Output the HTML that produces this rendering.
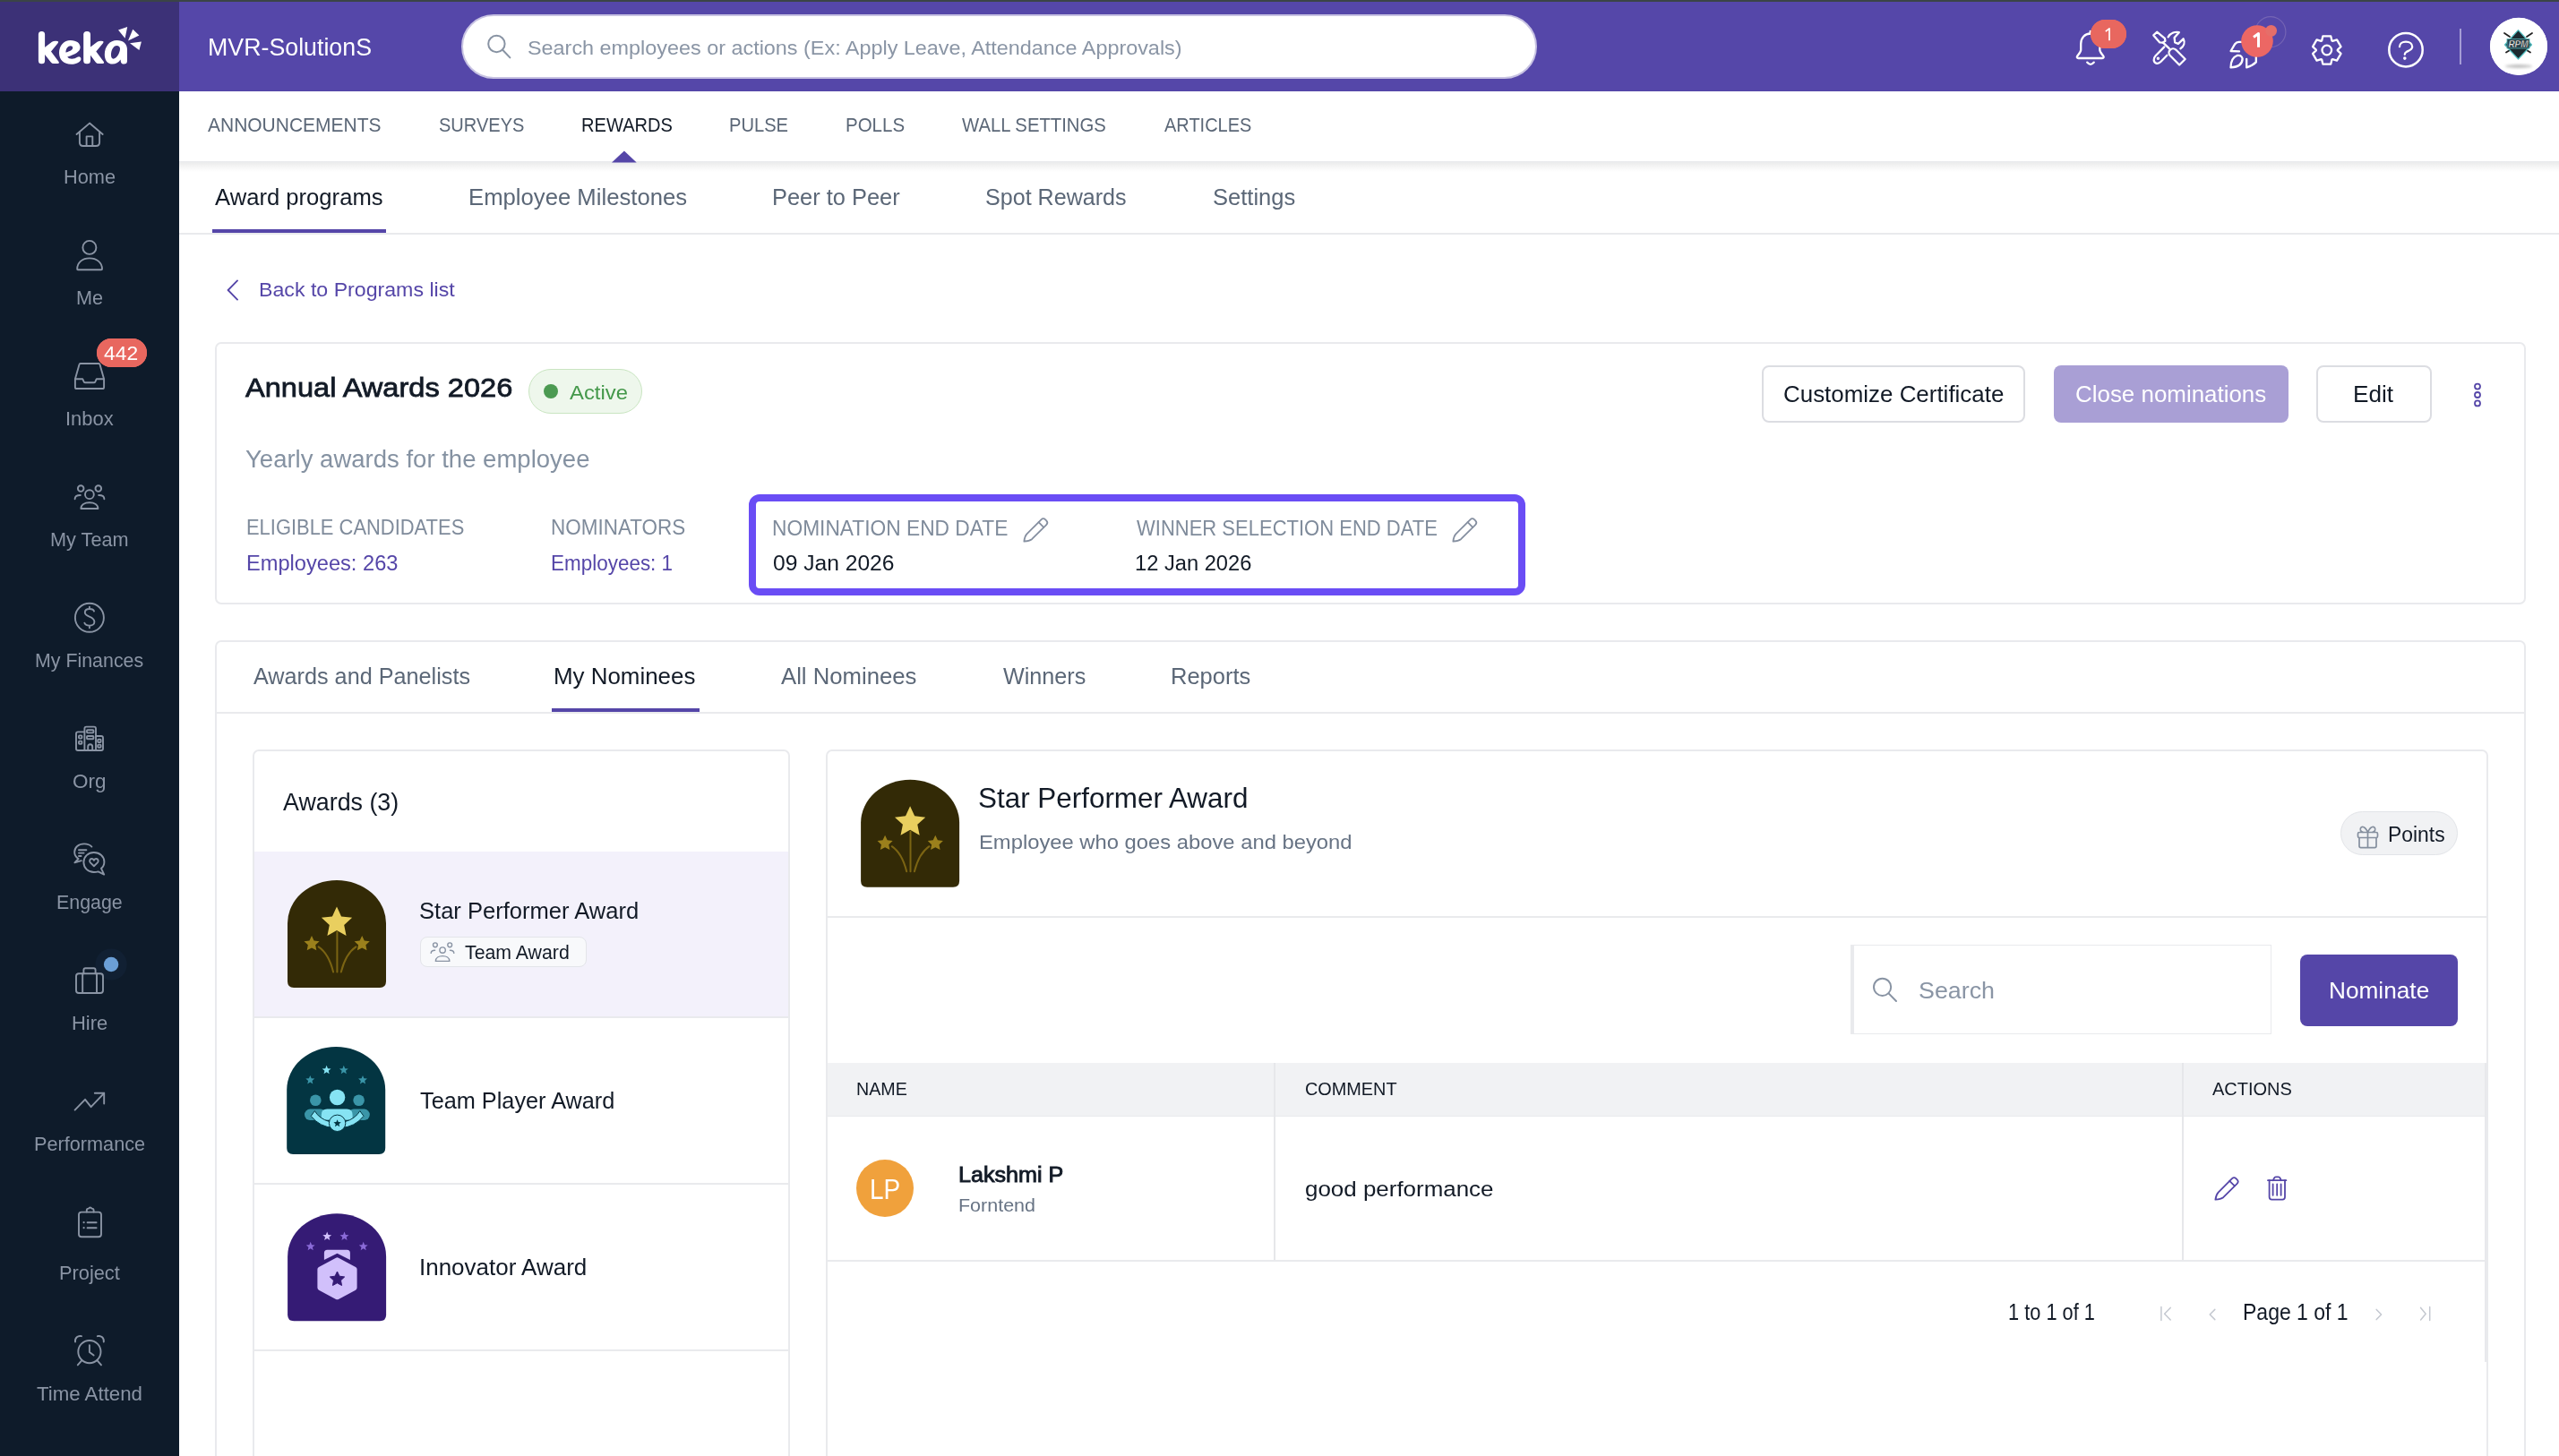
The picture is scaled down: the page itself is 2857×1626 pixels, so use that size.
<!DOCTYPE html><html><head><meta charset="utf-8"><style>
html,body{margin:0;padding:0}body{width:2857px;height:1626px;overflow:hidden;position:relative;background:#fff;font-family:"Liberation Sans",sans-serif}
.t{position:absolute;white-space:nowrap;line-height:1;transform-origin:0 0}
</style></head><body>
<div style="position:absolute;left:0px;top:0px;width:2857px;height:2px;background:#3b4446"></div>
<div style="position:absolute;left:0px;top:2px;width:200px;height:100px;background:#3c3177"></div>
<div style="position:absolute;left:200px;top:2px;width:2657px;height:100px;background:#5547a9"></div>
<div style="position:absolute;left:0px;top:102px;width:200px;height:1524px;background:#0e1b2a"></div>
<div style="position:absolute;left:200px;top:180px;width:2657px;height:12px;background:linear-gradient(#e8e9ec,#efefef 25%,#f6f6f6 55%,rgba(255,255,255,0))"></div>
<div style="position:absolute;left:200px;top:260px;width:2657px;height:2px;background:#e9eaed"></div>
<div style="position:absolute;left:237px;top:256px;width:194px;height:4px;background:#5546a8"></div>
<div style="position:absolute;left:515px;top:15.8px;width:1200.5px;height:71.8px;box-sizing:border-box;background:#fff;border:2px solid #c7c2e2;border-radius:36px"></div>
<div style="position:absolute;left:240px;top:382px;width:2580px;height:293px;box-sizing:border-box;border:2px solid #e9eaed;border-radius:7px;background:#fff"></div>
<div style="position:absolute;left:590px;top:412px;width:127px;height:50px;box-sizing:border-box;background:#eef7ec;border:1.5px solid #c9e5c1;border-radius:25px"></div>
<div style="position:absolute;left:607px;top:429px;width:16px;height:16px;background:#4c9a52;border-radius:50%"></div>
<div style="position:absolute;left:835.8px;top:551.6px;width:867.2px;height:113.4px;box-sizing:border-box;border:8px solid #6a4df5;border-radius:12px"></div>
<div style="position:absolute;left:1967px;top:408px;width:294px;height:64px;box-sizing:border-box;border:2px solid #dcdde2;border-radius:8px;background:#fff"></div>
<div style="position:absolute;left:2292.5px;top:408px;width:262px;height:64px;background:#a99fd5;border-radius:8px"></div>
<div style="position:absolute;left:2586.2px;top:408px;width:128.4px;height:64px;box-sizing:border-box;border:2px solid #dcdde2;border-radius:8px;background:#fff"></div>
<div style="position:absolute;left:240px;top:714.8px;width:2580px;height:1000px;box-sizing:border-box;border:2px solid #e9eaed;border-radius:7px;background:#fff"></div>
<div style="position:absolute;left:242px;top:795px;width:2576px;height:2px;background:#e9eaed"></div>
<div style="position:absolute;left:615.6px;top:791px;width:165.4px;height:4px;background:#5546a8"></div>
<div style="position:absolute;left:282px;top:837px;width:600px;height:900px;box-sizing:border-box;border:2px solid #e9eaed;border-radius:7px;background:#fff"></div>
<div style="position:absolute;left:284px;top:951px;width:596px;height:184px;background:#f3f1fb"></div>
<div style="position:absolute;left:284px;top:1135px;width:596px;height:2px;background:#e9eaed"></div>
<div style="position:absolute;left:284px;top:1321px;width:596px;height:2px;background:#e9eaed"></div>
<div style="position:absolute;left:284px;top:1506.5px;width:596px;height:2px;background:#e9eaed"></div>
<div style="position:absolute;left:468.5px;top:1045.6px;width:186px;height:34.7px;box-sizing:border-box;background:#f8f9fb;border:1.5px solid #e3e5e9;border-radius:8px"></div>
<div style="position:absolute;left:922px;top:837px;width:1856px;height:900px;box-sizing:border-box;border:2px solid #e9eaed;border-radius:7px;background:#fff"></div>
<div style="position:absolute;left:924px;top:1022.6px;width:1852px;height:2px;background:#e9eaed"></div>
<div style="position:absolute;left:2613.2px;top:906.2px;width:131.3px;height:49.2px;box-sizing:border-box;background:#f1f2f4;border:1.5px solid #e2e4e8;border-radius:25px"></div>
<div style="position:absolute;left:2066px;top:1055px;width:470px;height:100px;box-sizing:border-box;border:1.8px solid #e9eaed;border-left:4px solid #e9eaed;background:#fff"></div>
<div style="position:absolute;left:2568.4px;top:1066px;width:175.6px;height:79.6px;background:#5546a8;border-radius:8px"></div>
<div style="position:absolute;left:924px;top:1187px;width:1850px;height:58.5px;background:#f1f2f4"></div>
<div style="position:absolute;left:924px;top:1245.5px;width:1850px;height:1.6px;background:#e9eaed"></div>
<div style="position:absolute;left:924px;top:1406.5px;width:1850px;height:2px;background:#e9eaed"></div>
<div style="position:absolute;left:1421.7px;top:1187px;width:2px;height:220px;background:#e6e7ea"></div>
<div style="position:absolute;left:2436px;top:1187px;width:2px;height:220px;background:#e6e7ea"></div>
<div style="position:absolute;left:2774px;top:1187px;width:2px;height:334px;background:#e8e9ec"></div>
<div style="position:absolute;left:956px;top:1294.8px;width:64px;height:64px;background:#f0a13c;border-radius:50%"></div>
<div style="position:absolute;left:2334px;top:22px;width:40px;height:32px;background:#e8675f;border-radius:16px"></div>
<div style="position:absolute;left:108px;top:378px;width:56px;height:32px;background:#e8675f;border-radius:16px"></div>
<div style="position:absolute;left:2780px;top:19.8px;width:64px;height:64px;background:#fff;border-radius:50%"></div>
<div style="position:absolute;left:2746px;top:32px;width:2px;height:40px;background:#a59dd6"></div>
<svg style="position:absolute;left:0;top:0" width="2857" height="1626"><g fill="#fff">
<rect x="42.9" y="35" width="7.2" height="36.3" rx="3.5"/>
<path d="M48.5,54 L58,46.8 Q60,45.6 62.5,45.8 L64.3,46 Q66,46.6 64.6,48.3 L57,57.6 L65.8,69.3 Q66.6,71 64.5,71 L60,71 Q58,71 56.8,69.5 L48.5,59 Z"/>
<rect x="93.2" y="35" width="7.8" height="36.3" rx="3.6"/>
<path d="M99,54 L108.6,46.8 Q110.6,45.6 113,45.8 L114.8,46 Q116.4,46.6 115,48.3 L107.3,57.6 L116,69.3 Q116.8,71 114.7,71 L110,71 Q108,71 106.8,69.5 L99,59 Z"/>
<path fill-rule="evenodd" d="M78.6,44.9 C86,44.9 89.6,48.6 89.6,52.8 C89.6,57.8 84,60.6 75.2,63.6 C76.4,65.2 78,65.8 80.2,65.8 C82.6,65.8 84.6,64.9 86.4,63.8 C88.2,62.6 90.4,63.4 90.4,65.8 C90.4,67.4 89.4,68.6 88,69.5 C85.6,71 82.6,71.8 79.4,71.8 C71.2,71.8 66,66.6 66,59 C66,50.8 71.6,44.9 78.6,44.9 Z M73.4,58.6 C78,57.2 81.2,55.6 81.2,53.4 C81.2,52 80.2,51.2 78.8,51.2 C75.8,51.2 73.6,54 73.4,58.6 Z"/>
<path fill-rule="evenodd" d="M130.5,44.9 C137.5,44.9 142,48.8 142,55 L142,68 Q142,71.5 138.4,71.5 Q135,71.5 134.8,68.4 L134.6,66.6 C132.4,69.8 129.2,71.6 125.6,71.6 C120.2,71.6 116.8,67.4 116.8,61 C116.8,51.6 122.6,44.9 130.5,44.9 Z M124,61.6 C124,64.2 125,65.7 126.5,65.7 C130.2,65.7 134,59 134,54.6 C134,52.2 132.6,51 130.4,51 C126.6,51 124,56 124,61.6 Z"/>
<path d="M132,33.4 L142.2,30.1 L139.6,42.8 Z"/>
<path d="M148.3,32.7 L155.4,39.5 L143,45.4 Z"/>
<path d="M145,48.2 L157.9,46.4 L155.4,56 Z"/>
</g>
<g fill="none" stroke="#ffffff" stroke-width="2.3" stroke-linecap="round" stroke-linejoin="round">
<path d="M2333.75,34.8 V37.5"/>
<path d="M2333.75,37.5 C2327.6,37.5 2323.2,42.6 2323.2,49 V55.8 C2323.2,58.2 2320.6,60.6 2319.2,62.6 C2318.4,63.9 2318.9,65 2320.4,65 H2347.1 C2348.6,65 2349.1,63.9 2348.3,62.6 C2346.9,60.6 2344.3,58.2 2344.3,55.8 V49 C2344.3,42.6 2339.9,37.5 2333.75,37.5 Z"/>
<path d="M2330.2,69.6 Q2334,74.2 2337.8,69.6"/>
<path d="M2404.3,39.4 L2408.1,35.7 L2416.9,42.8 L2417.4,45.8 L2414.6,47.6 L2411.3,47.4 Z"/>
<path d="M2415,47.6 L2421.8,54.2"/>
<path d="M2422.75,62.05 L2433.15,72.45 L2439.65,65.95 L2429.25,55.55 A4.6,4.6 0 0 0 2422.75,62.05 Z"/>
<path d="M2420.6,41.3 C2423.5,36.8 2428.6,35.2 2432.8,36.2 L2427.6,42.1 L2428.2,47.4 L2431.9,48.8 L2437.6,43.3 C2439.8,47.6 2438.2,51.8 2434.4,54.2"/>
<path d="M2416.3,52.4 L2406.6,62.2 C2403.6,65.4 2404.2,69.6 2407.2,70.6 C2409.4,71.4 2411.2,70.2 2412.6,68.8 L2419.4,61.8"/>
<circle cx="2409.4" cy="65.2" r="0.6" fill="#fff"/>
<path d="M2490.6,57 L2495.2,49.2 Q2496.8,47 2499.6,46.9 L2506,46.9 M2490.6,57 L2500,57.4"/>
<path d="M2490.5,75.4 Q2490.6,64.6 2497.6,62 Q2502.6,61 2503.6,65.6 Q2503.4,74.6 2490.5,75.4 Z"/>
<path d="M2508.2,75.4 L2508.2,66 M2508.2,75.4 Q2515,73.2 2518.8,69.4 L2518.8,62"/>
<path d="M2592.17,45.40 L2593.33,40.43 L2602.27,40.43 L2603.43,45.40 L2604.16,45.82 L2609.05,44.35 L2613.52,52.08 L2609.79,55.58 L2609.79,56.42 L2613.52,59.92 L2609.05,67.65 L2604.16,66.18 L2603.43,66.60 L2602.27,71.57 L2593.33,71.57 L2592.17,66.60 L2591.44,66.18 L2586.55,67.65 L2582.08,59.92 L2585.81,56.42 L2585.81,55.58 L2582.08,52.08 L2586.55,44.35 L2591.44,45.82 Z"/>
<circle cx="2597.8" cy="56" r="5.3"/>
<circle cx="2686" cy="55.7" r="18.7" stroke-width="2.5"/>
<path d="M2679,52.2 C2679,48.6 2682,46.6 2686,46.6 C2690.2,46.6 2693.2,48.8 2693.2,52.2 C2693.2,55.4 2689.6,56.4 2686.6,58 C2685.2,58.8 2684.8,59.4 2684.8,60.8"/>
</g>
<circle cx="2684.8" cy="65.1" r="1.8" fill="#fff"/>
<circle cx="2535" cy="35.6" r="16.9" fill="none" stroke="#7464b4" stroke-width="1.2"/>
<rect x="2334" y="22" width="40" height="32" rx="16" fill="#e8675f"/>
<circle cx="2520" cy="46" r="17.8" fill="#ec6764"/>
<circle cx="2535.6" cy="34.4" r="6.4" fill="#e66e69"/>
<rect x="108" y="378" width="56" height="32" rx="16" fill="#e8675f"/>
<path d="M2355,45.3 V31.8 L2350.8,35.2" fill="none" stroke="#fff" stroke-width="1.7" stroke-linejoin="round"/>
<path d="M2521.5,52.8 V37.6 L2516,41.4" fill="none" stroke="#fff" stroke-width="3" stroke-linejoin="round"/>
<defs><filter id="blr" x="-50%" y="-50%" width="200%" height="200%"><feGaussianBlur stdDeviation="1.6"/></filter></defs>
<circle cx="2812" cy="51.8" r="32" fill="#fff"/>
<ellipse cx="2812" cy="74" rx="15" ry="1.9" fill="#c2c2c2" filter="url(#blr)"/>
<path d="M2796,37 L2802,41 M2827,37 L2821,41 M2798,58.5 L2803,55.5 M2825,58.5 L2820,55.5" stroke="#222" stroke-width="1.8" stroke-linecap="round"/>
<path d="M2811.5,33.6 L2826.5,50 L2811.5,66 L2796.5,50 Z" fill="#1b2a30" stroke="#55c3c6" stroke-width="1.2" stroke-linejoin="round"/>
<rect x="2799" y="43.5" width="25" height="10.5" fill="#24404a" stroke="#5ab6b8" stroke-width="0.8"/>
<text x="2811.5" y="52.6" font-family="Liberation Sans" font-weight="700" font-style="italic" font-size="10" fill="#eceeee" stroke="#111" stroke-width="0.3" text-anchor="middle">RPM</text>
<circle cx="124.1" cy="1077" r="17.6" fill="#112033"/>
<g fill="none" stroke="#8a94a4" stroke-width="1.9" stroke-linecap="round" stroke-linejoin="round">
<path d="M85.5,150 L100,137.6 L114.7,150"/>
<path d="M88.9,147.2 V159 Q88.9,163 92.9,163 H107.1 Q111.1,163 111.1,159 V147.2"/>
<path d="M96.6,163 V152.4 H103.3 V163"/>
<circle cx="99.9" cy="276.4" r="7.5"/>
<path d="M86.2,300.4 C86.2,293 92,288.4 99.9,288.4 C107.8,288.4 114,293 114,300.4 Q114,301.2 113,301.2 H87 Q86.2,301.2 86.2,300.4 Z"/>
<path d="M89.6,406 H110.4 Q111.2,406 111.4,406.8 L116.1,423.2 V432.4 Q116.1,434 114.5,434 H85.5 Q83.9,434 83.9,432.4 V423.2 L88.6,406.8 Q88.8,406 89.6,406 Z"/>
<path d="M84.2,423.2 H92.2 L93.6,426.2 Q94.2,427.3 95.4,427.3 H104.6 Q105.8,427.3 106.4,426.2 L107.8,423.2 H115.8"/>
<circle cx="99.9" cy="552.2" r="4.9"/>
<path d="M90.4,568 C90.4,563.6 94.4,561.2 99.9,561.2 C105.4,561.2 109.4,563.6 109.4,568 Z"/>
<circle cx="90.2" cy="545.6" r="3.3"/>
<circle cx="109.8" cy="545.6" r="3.3"/>
<path d="M83.6,557.2 C83.6,554.4 86,553 89.8,553"/>
<path d="M116.4,557.2 C116.4,554.4 114,553 110.2,553"/>
<circle cx="99.9" cy="689.8" r="16"/>
<path d="M105,682.6 C104.4,680.8 102.6,680 100,680 C96.6,680 94.8,681.8 94.8,684 C94.8,689.6 105.4,687.6 105.4,694.4 C105.4,697 103,698.6 99.9,698.6 C97,698.6 94.8,697.4 94.3,695.6 M99.9,677.6 V680 M99.9,698.6 V701.2"/>
<path d="M94.4,838 V813.6 Q94.4,811.6 96.4,811.6 H105 Q107,811.6 107,813.6 V838"/>
<path d="M94.4,817.4 H87 Q85,817.4 85,819.4 V836 Q85,838 87,838 H113 Q115,838 115,836 V824 Q115,822 113,822 H107"/>
<rect x="97" y="815.2" width="7.4" height="3.2" rx="0.8"/><rect x="97" y="822" width="7.4" height="3.2" rx="0.8"/>
<rect x="88" y="821.4" width="3.4" height="3.2" rx="0.8"/><rect x="88" y="827.6" width="3.4" height="3.2" rx="0.8"/>
<rect x="109.2" y="825.8" width="3.4" height="3.2" rx="0.8"/><rect x="109.2" y="831.6" width="3.4" height="3.2" rx="0.8"/>
<path d="M98.2,838 V833.8 Q98.2,831.2 100.7,831.2 Q103.2,831.2 103.2,833.8 V838"/>
<path d="M102.4,945.6 C100.6,943.6 97.4,942.4 94,942.4 C87.6,942.4 83.2,946.4 83.2,951.6 C83.2,954.8 84.8,957.4 87.6,959 L83.4,963.4 L90.8,961.2"/>
<path d="M88,949.2 H96.4 M88,952.6 H93.6 M88,956 H90.6"/>
<path d="M104.8,952 C111.4,952 116.4,956.6 116.4,962.4 C116.4,965.4 115.2,968 113,969.8 L116.2,976.6 L109.6,973.4 C108.2,973.8 106.6,974 104.8,974 C98.4,974 93.4,969.2 93.4,963 C93.4,956.8 98.4,952 104.8,952 Z"/>
<path d="M104.9,967.2 L100.9,963.4 C99.4,961.8 100.2,959 102.4,959 C103.6,959 104.4,959.8 104.9,960.8 C105.4,959.8 106.2,959 107.4,959 C109.6,959 110.4,961.8 108.9,963.4 Z"/>
<rect x="85" y="1087.2" width="30" height="21.8" rx="3"/>
<path d="M93.4,1087.2 V1083.2 Q93.4,1081.2 95.4,1081.2 H104.6 Q106.6,1081.2 106.6,1083.2 V1087.2"/>
<path d="M92.2,1087.2 V1109 M108,1087.2 V1109"/>
<path d="M83.6,1239.6 L95,1227.8 L101.6,1236.2 L116.2,1220.8"/>
<path d="M105.8,1220.8 H116.2 V1232.6"/>
<rect x="88" y="1353.6" width="25" height="27.6" rx="3"/>
<path d="M96.8,1353.6 V1351.6 Q96.8,1349.6 98.8,1349.6 H99 A1.9,1.9 0 0 1 102.4,1349.6 H102.6 Q104.6,1349.6 104.6,1351.6 V1353.6"/>
<path d="M97.6,1365.2 H107.6 M97.6,1371.2 H107.6"/>
</g>
<g fill="#8a94a4"><circle cx="93.6" cy="1365.2" r="1.1"/><circle cx="93.6" cy="1371.2" r="1.1"/></g>
<g fill="none" stroke="#8a94a4" stroke-width="1.9" stroke-linecap="round" stroke-linejoin="round">
<circle cx="99.9" cy="1509.6" r="12.6"/>
<path d="M99.9,1502.2 V1510 L104.6,1513.6"/>
<path d="M84,1498.6 C83.4,1494.2 87,1491 91,1492.2 M115.8,1498.6 C116.4,1494.2 112.8,1491 108.8,1492.2"/>
<path d="M91.4,1519.2 L86.8,1524.4 M108.4,1519.2 L113,1524.4"/>
</g>
<circle cx="124.1" cy="1077" r="8.2" fill="#6b9fd6"/>
<path d="M683,181.6 L696.9,168.4 L710.7,181.6 Z" fill="#5546a8"/>
<g fill="none" stroke="#8893a3" stroke-width="2" stroke-linecap="round">
<circle cx="554.4" cy="49" r="9.2"/><path d="M561.2,55.8 L569.4,64.4"/>
<circle cx="2101.6" cy="1102.3" r="9.6"/><path d="M2108.6,1109.4 L2117,1118"/>
</g>
<path d="M265,313.4 L254.6,324 L265,334.6" fill="none" stroke="#5546a8" stroke-width="1.9" stroke-linecap="round" stroke-linejoin="round"/>
<g transform="translate(0,0)" fill="none" stroke="#858fa0" stroke-width="1.8" stroke-linejoin="round" stroke-linecap="round"><path d="M1143.4,604.6 Q1144,598.8 1146.6,596.2 L1162.4,580.4 Q1164.8,578 1167.2,580.4 L1168.2,581.4 Q1170.6,583.8 1168.2,586.2 L1152,602.2 Q1149.2,604.2 1143.4,604.6 Z"/><path d="M1159.6,583.2 L1165.2,588.8"/></g>
<g transform="translate(479,0)" fill="none" stroke="#858fa0" stroke-width="1.8" stroke-linejoin="round" stroke-linecap="round"><path d="M1143.4,604.6 Q1144,598.8 1146.6,596.2 L1162.4,580.4 Q1164.8,578 1167.2,580.4 L1168.2,581.4 Q1170.6,583.8 1168.2,586.2 L1152,602.2 Q1149.2,604.2 1143.4,604.6 Z"/><path d="M1159.6,583.2 L1165.2,588.8"/></g>
<g fill="none" stroke="#5546a8" stroke-width="1.8"><circle cx="2766" cy="431.6" r="3"/><circle cx="2766" cy="441" r="3"/><circle cx="2766" cy="450.4" r="3"/></g>
<g fill="none" stroke="#8a94a4" stroke-width="1.4" stroke-linecap="round">
<circle cx="494.1" cy="1061.1" r="3.2"/>
<path d="M486.4,1073.4 C486.4,1069.8 489.8,1067.6 494.1,1067.6 C498.4,1067.6 501.8,1069.8 501.8,1073.4 Z"/>
<circle cx="485.9" cy="1055.3" r="2.4"/><circle cx="502.2" cy="1055.3" r="2.4"/>
<path d="M481.2,1064.4 C481.2,1062.4 483,1061.2 485.6,1061.2 M506.8,1064.4 C506.8,1062.4 505,1061.2 502.4,1061.2"/>
</g>
<g fill="none" stroke="#858f9e" stroke-width="1.7" stroke-linejoin="round">
<rect x="2632.5" y="929.5" width="22" height="6" rx="1.6"/>
<path d="M2634,935.5 V944.8 Q2634,946.6 2635.8,946.6 H2651.2 Q2653,946.6 2653,944.8 V935.5"/>
<path d="M2643.5,929.5 V946.6"/>
<path d="M2643.5,929.4 C2641.6,925.4 2639.6,923.4 2637.6,923.4 C2635.6,923.4 2635,925.2 2635.4,927 C2635.8,928.6 2637,929.4 2638.4,929.4 M2643.5,929.4 C2645.4,925.4 2647.4,923.4 2649.4,923.4 C2651.4,923.4 2652,925.2 2651.6,927 C2651.2,928.6 2650,929.4 2648.6,929.4"/>
</g>
<g fill="none" stroke="#5546a8" stroke-width="1.8" stroke-linejoin="round" stroke-linecap="round">
<path d="M2473.4,1339.6 Q2474.2,1334.2 2476.6,1331.6 L2492,1316.2 Q2494.2,1314 2496.4,1316.2 L2497.6,1317.4 Q2499.8,1319.6 2497.6,1321.8 L2482.2,1337.2 Q2479.4,1339.2 2473.4,1339.6 Z"/>
<path d="M2489.2,1318.8 L2494.8,1324.4"/>
<path d="M2532,1318.2 H2552.4 M2537.8,1318.2 L2539,1315.6 Q2539.6,1314.4 2540.8,1314.4 H2543.8 Q2545,1314.4 2545.6,1315.6 L2546.8,1318.2"/>
<path d="M2533.6,1318.2 V1336.8 Q2533.6,1339.6 2536.4,1339.6 H2548.2 Q2551,1339.6 2551,1336.8 V1318.2"/>
<path d="M2537.6,1322.4 V1334.8 M2542.2,1322.4 V1334.8 M2546.6,1322.4 V1334.8"/>
</g>
<g fill="none" stroke="#c4c8d0" stroke-width="1.5" stroke-linecap="round" stroke-linejoin="round">
<path d="M2412.9,1459.6 V1474.6 M2423.2,1460.4 L2416.6,1467.2 L2423.2,1474"/>
<path d="M2472.8,1462.4 L2467.2,1468 L2472.8,1473.6"/>
<path d="M2653.2,1462.4 L2658.6,1468 L2653.2,1473.6"/>
<path d="M2702.6,1460.4 L2708.2,1467.2 L2702.6,1474 M2712.7,1459.6 V1474.6"/>
</g>
<path d="M961.1,918.8 A55,48 0 0 1 1071.1,918.8 L1071.1,983.8 Q1071.1,990.8 1064.1,990.8 L968.1,990.8 Q961.1,990.8 961.1,983.8 Z" fill="#332a06"/>
<g fill="none" stroke="#7b6413" stroke-width="2" stroke-linecap="round"><path d="M1016.5,928.8 V973.3"/><path d="M995.7,945.1999999999999 Q1007.1,952.8 1012.2,973.3"/><path d="M1037.5,945.1999999999999 Q1026.1,952.8 1020.9,973.3"/></g>
<path d="M1016.10,900.20 L1021.15,911.24 L1033.22,912.64 L1024.28,920.86 L1026.68,932.76 L1016.10,926.80 L1005.52,932.76 L1007.92,920.86 L998.98,912.64 L1011.05,911.24 Z" fill="#e9cf5f"/>
<path d="M988.10,932.80 L990.69,938.24 L996.66,939.02 L992.28,943.16 L993.39,949.08 L988.10,946.20 L982.81,949.08 L983.92,943.16 L979.54,939.02 L985.51,938.24 Z" fill="#9b801c"/>
<path d="M1044.30,932.80 L1046.89,938.24 L1052.86,939.02 L1048.48,943.16 L1049.59,949.08 L1044.30,946.20 L1039.01,949.08 L1040.12,943.16 L1035.74,939.02 L1041.71,938.24 Z" fill="#9b801c"/>
<path d="M321,1031 A55,48 0 0 1 431,1031 L431,1096 Q431,1103 424,1103 L328,1103 Q321,1103 321,1096 Z" fill="#332a06"/>
<g fill="none" stroke="#7b6413" stroke-width="2" stroke-linecap="round"><path d="M376.4,1041 V1085.5"/><path d="M355.6,1057.4 Q367,1065 372.1,1085.5"/><path d="M397.4,1057.4 Q386,1065 380.8,1085.5"/></g>
<path d="M376.00,1012.40 L381.05,1023.44 L393.12,1024.84 L384.18,1033.06 L386.58,1044.96 L376.00,1039.00 L365.42,1044.96 L367.82,1033.06 L358.88,1024.84 L370.95,1023.44 Z" fill="#e9cf5f"/>
<path d="M348.00,1045.00 L350.59,1050.44 L356.56,1051.22 L352.18,1055.36 L353.29,1061.28 L348.00,1058.40 L342.71,1061.28 L343.82,1055.36 L339.44,1051.22 L345.41,1050.44 Z" fill="#9b801c"/>
<path d="M404.20,1045.00 L406.79,1050.44 L412.76,1051.22 L408.38,1055.36 L409.49,1061.28 L404.20,1058.40 L398.91,1061.28 L400.02,1055.36 L395.64,1051.22 L401.61,1050.44 Z" fill="#9b801c"/>
<path d="M320.2,1217 A55,48 0 0 1 430.2,1217 L430.2,1282 Q430.2,1289 423.2,1289 L327.2,1289 Q320.2,1289 320.2,1282 Z" fill="#033542"/>
<path d="M364.60,1189.80 L365.95,1193.14 L369.55,1193.39 L366.79,1195.71 L367.66,1199.21 L364.60,1197.30 L361.54,1199.21 L362.41,1195.71 L359.65,1193.39 L363.25,1193.14 Z" fill="#86e3f3"/>
<path d="M383.80,1189.80 L385.15,1193.14 L388.75,1193.39 L385.99,1195.71 L386.86,1199.21 L383.80,1197.30 L380.74,1199.21 L381.61,1195.71 L378.85,1193.39 L382.45,1193.14 Z" fill="#3a95a8"/>
<path d="M346.30,1201.00 L347.65,1204.34 L351.25,1204.59 L348.49,1206.91 L349.36,1210.41 L346.30,1208.50 L343.24,1210.41 L344.11,1206.91 L341.35,1204.59 L344.95,1204.34 Z" fill="#3a95a8"/>
<path d="M405.00,1201.00 L406.35,1204.34 L409.95,1204.59 L407.19,1206.91 L408.06,1210.41 L405.00,1208.50 L401.94,1210.41 L402.81,1206.91 L400.05,1204.59 L403.65,1204.34 Z" fill="#3a95a8"/>
<circle cx="352.3" cy="1228.8" r="6.3" fill="#3a95a8"/>
<circle cx="400.6" cy="1228.8" r="6.3" fill="#3a95a8"/>
<circle cx="376.59999999999997" cy="1225.5" r="8.7" fill="#86e3f3"/>
<rect x="340.0" y="1238.6" width="24" height="12.4" rx="6.2" fill="#3a95a8"/>
<rect x="388.79999999999995" y="1238.6" width="24" height="12.4" rx="6.2" fill="#3a95a8"/>
<path d="M358.8,1250.7 V1245 Q358.8,1238.6 365.2,1238.6 H387.2 Q393.6,1238.6 393.6,1245 V1250.7 Z" fill="#86e3f3"/>
<path d="M347.20,1246.40 L351.40,1240.60 L354.20,1244.60 Q361.60,1252.40 372.60,1253.20 L372.60,1259.60 Q357.00,1258.60 347.20,1246.40 Z" fill="#86e3f3" stroke="#033542" stroke-width="1"/>
<path d="M406.00,1246.40 L401.80,1240.60 L399.00,1244.60 Q391.60,1252.40 380.60,1253.20 L380.60,1259.60 Q396.20,1258.60 406.00,1246.40 Z" fill="#86e3f3" stroke="#033542" stroke-width="1"/>
<circle cx="376.59999999999997" cy="1254.3" r="9.2" fill="#86e3f3" stroke="#033542" stroke-width="1"/>
<path d="M376.60,1250.20 L377.78,1252.98 L380.78,1253.24 L378.50,1255.22 L379.19,1258.16 L376.60,1256.60 L374.01,1258.16 L374.70,1255.22 L372.42,1253.24 L375.42,1252.98 Z" fill="#033542"/>
<path d="M321.1,1403.2 A55,48 0 0 1 431.1,1403.2 L431.1,1468.2 Q431.1,1475.2 424.1,1475.2 L328.1,1475.2 Q321.1,1475.2 321.1,1468.2 Z" fill="#351b75"/>
<path d="M365.20,1375.60 L366.55,1378.94 L370.15,1379.19 L367.39,1381.51 L368.26,1385.01 L365.20,1383.10 L362.14,1385.01 L363.01,1381.51 L360.25,1379.19 L363.85,1378.94 Z" fill="#d1c0fb"/>
<path d="M384.50,1375.60 L385.85,1378.94 L389.45,1379.19 L386.69,1381.51 L387.56,1385.01 L384.50,1383.10 L381.44,1385.01 L382.31,1381.51 L379.55,1379.19 L383.15,1378.94 Z" fill="#8b6bd8"/>
<path d="M346.70,1386.80 L348.05,1390.14 L351.65,1390.39 L348.89,1392.71 L349.76,1396.21 L346.70,1394.30 L343.64,1396.21 L344.51,1392.71 L341.75,1390.39 L345.35,1390.14 Z" fill="#8b6bd8"/>
<path d="M405.70,1386.80 L407.05,1390.14 L410.65,1390.39 L407.89,1392.71 L408.76,1396.21 L405.70,1394.30 L402.64,1396.21 L403.51,1392.71 L400.75,1390.39 L404.35,1390.14 Z" fill="#8b6bd8"/>
<path d="M361.90000000000003,1407.0 V1399.2 Q361.90000000000003,1395.7 365.40000000000003,1395.7 H387.40000000000003 Q390.90000000000003,1395.7 390.90000000000003,1399.2 V1407.0 L376.5,1399.8 Z" fill="#d1c0fb"/>
<path d="M376.50,1407.30 L395.60,1417.55 L395.60,1438.05 L376.50,1448.30 L357.40,1438.05 L357.40,1417.55 Z" fill="#d1c0fb" stroke="#d1c0fb" stroke-width="6" stroke-linejoin="round"/>
<path d="M376.50,1420.00 L378.97,1425.20 L384.68,1425.94 L380.49,1429.90 L381.55,1435.56 L376.50,1432.80 L371.45,1435.56 L372.51,1429.90 L368.32,1425.94 L374.03,1425.20 Z" fill="#351b75" stroke="#351b75" stroke-width="1" stroke-linejoin="round"/></svg>
<div class="t" style="left:231.77px;top:39.80px;font-size:27.04px;font-weight:400;color:#ffffff;transform:scaleX(0.9903)">MVR-SolutionS</div>
<div class="t" style="left:588.97px;top:41.80px;font-size:22.82px;font-weight:400;color:#8a95a5;transform:scaleX(1.0251)">Search employees or actions (Ex: Apply Leave, Attendance Approvals)</div>
<div class="t" style="left:70.71px;top:187.20px;font-size:21.91px;font-weight:400;color:#8a94a4;transform:scaleX(0.9939)">Home</div>
<div class="t" style="left:84.71px;top:322.20px;font-size:21.91px;font-weight:400;color:#8a94a4;transform:scaleX(0.9881)">Me</div>
<div class="t" style="left:72.50px;top:457.20px;font-size:21.91px;font-weight:400;color:#8a94a4;transform:scaleX(1.0022)">Inbox</div>
<div class="t" style="left:56.01px;top:592.30px;font-size:21.91px;font-weight:400;color:#8a94a4;transform:scaleX(0.9907)">My Team</div>
<div class="t" style="left:38.82px;top:727.00px;font-size:21.91px;font-weight:400;color:#8a94a4;transform:scaleX(0.9755)">My Finances</div>
<div class="t" style="left:81.27px;top:861.80px;font-size:21.91px;font-weight:400;color:#8a94a4;transform:scaleX(1.0252)">Org</div>
<div class="t" style="left:62.72px;top:997.00px;font-size:21.91px;font-weight:400;color:#8a94a4;transform:scaleX(0.9752)">Engage</div>
<div class="t" style="left:79.60px;top:1132.10px;font-size:21.91px;font-weight:400;color:#8a94a4;transform:scaleX(1.0030)">Hire</div>
<div class="t" style="left:37.51px;top:1267.40px;font-size:21.91px;font-weight:400;color:#8a94a4;transform:scaleX(0.9894)">Performance</div>
<div class="t" style="left:65.81px;top:1410.70px;font-size:21.91px;font-weight:400;color:#8a94a4;transform:scaleX(0.9941)">Project</div>
<div class="t" style="left:41.00px;top:1545.60px;font-size:21.91px;font-weight:400;color:#8a94a4;transform:scaleX(1.0163)">Time Attend</div>
<div class="t" style="left:115.90px;top:384.30px;font-size:22.24px;font-weight:400;color:#ffffff;transform:scaleX(1.0264)">442</div>
<div class="t" style="left:232.20px;top:129.00px;font-size:21.66px;font-weight:400;color:#5b6777;transform:scaleX(0.9685)">ANNOUNCEMENTS</div>
<div class="t" style="left:489.60px;top:129.00px;font-size:21.66px;font-weight:400;color:#5b6777;transform:scaleX(0.9253)">SURVEYS</div>
<div class="t" style="left:648.87px;top:129.00px;font-size:21.66px;font-weight:400;color:#121a26;transform:scaleX(0.9277)">REWARDS</div>
<div class="t" style="left:814.37px;top:129.00px;font-size:21.66px;font-weight:400;color:#5b6777;transform:scaleX(0.9300)">PULSE</div>
<div class="t" style="left:943.95px;top:129.00px;font-size:21.66px;font-weight:400;color:#5b6777;transform:scaleX(0.9462)">POLLS</div>
<div class="t" style="left:1074.30px;top:129.00px;font-size:21.66px;font-weight:400;color:#5b6777;transform:scaleX(0.9364)">WALL SETTINGS</div>
<div class="t" style="left:1300.40px;top:129.00px;font-size:21.66px;font-weight:400;color:#5b6777;transform:scaleX(0.9223)">ARTICLES</div>
<div class="t" style="left:240.30px;top:207.90px;font-size:25.15px;font-weight:400;color:#121a26;transform:scaleX(1.0196)">Award programs</div>
<div class="t" style="left:522.76px;top:207.90px;font-size:25.15px;font-weight:400;color:#5b6777;transform:scaleX(1.0217)">Employee Milestones</div>
<div class="t" style="left:862.48px;top:207.90px;font-size:25.15px;font-weight:400;color:#5b6777;transform:scaleX(1.0103)">Peer to Peer</div>
<div class="t" style="left:1100.40px;top:207.90px;font-size:25.15px;font-weight:400;color:#5b6777;transform:scaleX(0.9979)">Spot Rewards</div>
<div class="t" style="left:1353.68px;top:207.90px;font-size:25.15px;font-weight:400;color:#5b6777;transform:scaleX(1.0160)">Settings</div>
<div class="t" style="left:288.69px;top:311.80px;font-size:22.97px;font-weight:400;color:#5546a8;transform:scaleX(1.0078)">Back to Programs list</div>
<div class="t" style="left:274.40px;top:417.80px;font-size:30.23px;font-weight:400;color:#121a26;transform:scaleX(1.0781);-webkit-text-stroke:0.8px #121a26">Annual Awards 2026</div>
<div class="t" style="left:635.60px;top:426.80px;font-size:22.97px;font-weight:400;color:#44984a;transform:scaleX(1.0377)">Active</div>
<div class="t" style="left:274.00px;top:499.30px;font-size:27.76px;font-weight:400;color:#8592a2;transform:scaleX(0.9916)">Yearly awards for the employee</div>
<div class="t" style="left:274.80px;top:578.10px;font-size:23.04px;font-weight:400;color:#7f8b9b;transform:scaleX(0.9519)">ELIGIBLE CANDIDATES</div>
<div class="t" style="left:274.73px;top:618.00px;font-size:23.07px;font-weight:400;color:#5546a8;transform:scaleX(1.0244)">Employees: 263</div>
<div class="t" style="left:615.02px;top:578.10px;font-size:23.04px;font-weight:400;color:#7f8b9b;transform:scaleX(0.9757)">NOMINATORS</div>
<div class="t" style="left:615.03px;top:618.00px;font-size:23.07px;font-weight:400;color:#5546a8;transform:scaleX(0.9739)">Employees: 1</div>
<div class="t" style="left:862.01px;top:578.50px;font-size:23.04px;font-weight:400;color:#7f8b9b;transform:scaleX(0.9879)">NOMINATION END DATE</div>
<div class="t" style="left:863.00px;top:618.10px;font-size:23.07px;font-weight:400;color:#121a26;transform:scaleX(1.0672)">09 Jan 2026</div>
<div class="t" style="left:1268.50px;top:578.50px;font-size:23.04px;font-weight:400;color:#7f8b9b;transform:scaleX(0.9555)">WINNER SELECTION END DATE</div>
<div class="t" style="left:1267.47px;top:618.10px;font-size:23.07px;font-weight:400;color:#121a26;transform:scaleX(1.0269)">12 Jan 2026</div>
<div class="t" style="left:1991.37px;top:427.90px;font-size:25.15px;font-weight:400;color:#121a26;transform:scaleX(1.0311)">Customize Certificate</div>
<div class="t" style="left:2316.97px;top:427.90px;font-size:25.15px;font-weight:400;color:#ffffff;transform:scaleX(1.0309)">Close nominations</div>
<div class="t" style="left:2626.92px;top:427.90px;font-size:25.15px;font-weight:400;color:#121a26;transform:scaleX(1.0403)">Edit</div>
<div class="t" style="left:282.50px;top:742.75px;font-size:25.44px;font-weight:400;color:#5b6777;transform:scaleX(0.9912)">Awards and Panelists</div>
<div class="t" style="left:618.36px;top:742.75px;font-size:25.44px;font-weight:400;color:#121a26;transform:scaleX(1.0185)">My Nominees</div>
<div class="t" style="left:872.00px;top:742.75px;font-size:25.44px;font-weight:400;color:#5b6777;transform:scaleX(1.0105)">All Nominees</div>
<div class="t" style="left:1120.00px;top:742.75px;font-size:25.44px;font-weight:400;color:#5b6777;transform:scaleX(0.9895)">Winners</div>
<div class="t" style="left:1306.89px;top:742.75px;font-size:25.44px;font-weight:400;color:#5b6777;transform:scaleX(1.0029)">Reports</div>
<div class="t" style="left:316.10px;top:882.70px;font-size:26.82px;font-weight:400;color:#121a26;transform:scaleX(1.0007)">Awards (3)</div>
<div class="t" style="left:467.89px;top:1005.20px;font-size:25.29px;font-weight:400;color:#121a26;transform:scaleX(1.0110)">Star Performer Award</div>
<div class="t" style="left:518.90px;top:1052.90px;font-size:21.66px;font-weight:400;color:#121a26;transform:scaleX(0.9830)">Team Award</div>
<div class="t" style="left:468.90px;top:1216.60px;font-size:25.29px;font-weight:400;color:#121a26;transform:scaleX(1.0001)">Team Player Award</div>
<div class="t" style="left:467.94px;top:1403.20px;font-size:25.29px;font-weight:400;color:#121a26;transform:scaleX(1.0278)">Innovator Award</div>
<div class="t" style="left:1092.10px;top:876.20px;font-size:31.40px;font-weight:400;color:#121a26;transform:scaleX(1.0005)">Star Performer Award</div>
<div class="t" style="left:1092.70px;top:929.10px;font-size:22.67px;font-weight:400;color:#677384;transform:scaleX(1.0498)">Employee who goes above and beyond</div>
<div class="t" style="left:2666.13px;top:920.90px;font-size:23.55px;font-weight:400;color:#121a26;transform:scaleX(0.9722)">Points</div>
<div class="t" style="left:2142.38px;top:1092.70px;font-size:26.31px;font-weight:400;color:#8a95a5;transform:scaleX(1.0199)">Search</div>
<div class="t" style="left:2599.71px;top:1094.00px;font-size:25.15px;font-weight:400;color:#ffffff;transform:scaleX(1.0429)">Nominate</div>
<div class="t" style="left:956.19px;top:1207.00px;font-size:19.48px;font-weight:400;color:#121a26;transform:scaleX(1.0097)">NAME</div>
<div class="t" style="left:1456.90px;top:1207.00px;font-size:19.48px;font-weight:400;color:#121a26;transform:scaleX(1.0200)">COMMENT</div>
<div class="t" style="left:2470.30px;top:1207.00px;font-size:19.48px;font-weight:400;color:#121a26;transform:scaleX(1.0272)">ACTIONS</div>
<div class="t" style="left:971.13px;top:1313.10px;font-size:31.54px;font-weight:400;color:#ffffff;transform:scaleX(0.8864)">LP</div>
<div class="t" style="left:1069.90px;top:1299.75px;font-size:24.56px;font-weight:400;color:#121a26;transform:scaleX(1.0238);-webkit-text-stroke:0.9px #121a26">Lakshmi P</div>
<div class="t" style="left:1070.47px;top:1336.00px;font-size:20.93px;font-weight:400;color:#677384;transform:scaleX(1.0268)">Forntend</div>
<div class="t" style="left:1457.00px;top:1316.90px;font-size:23.32px;font-weight:400;color:#121a26;transform:scaleX(1.1124)">good performance</div>
<div class="t" style="left:2241.83px;top:1452.90px;font-size:24.93px;font-weight:400;color:#121a26;transform:scaleX(0.8744)">1 to 1 of 1</div>
<div class="t" style="left:2503.65px;top:1453.00px;font-size:24.93px;font-weight:400;color:#121a26;transform:scaleX(0.9228)">Page 1 of 1</div>
</body></html>
